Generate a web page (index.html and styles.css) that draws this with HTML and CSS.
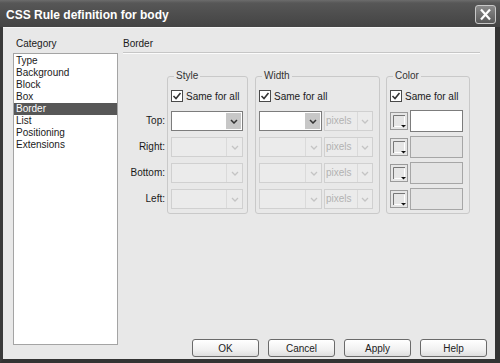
FILE: index.html
```html
<!DOCTYPE html>
<html lang="en">
<head>
<meta charset="UTF-8">
<title>CSS Rule definition for body</title>
<link rel="stylesheet" href="styles.css">
</head>
<body>

<div class="window">
  <div class="titlebar">
    <span class="title">CSS Rule definition for body</span>
    <div class="close">
      <svg width="19" height="17" viewBox="0 0 19 17"><path d="M5 3.5 L14 13.5 M14 3.5 L5 13.5" stroke="#fff" stroke-width="2.2" fill="none"/></svg>
    </div>
  </div>

  <div class="content">
    <div class="sidebar">
      <div class="caption">Category</div>
      <ul class="category-list">
        <li>Type</li>
        <li>Background</li>
        <li>Block</li>
        <li>Box</li>
        <li class="selected">Border</li>
        <li>List</li>
        <li>Positioning</li>
        <li>Extensions</li>
      </ul>
    </div>

    <div class="main">
      <div class="section-title">Border</div>

      <div class="panel">
        <div class="row-labels">
          <div>Top:</div>
          <div>Right:</div>
          <div>Bottom:</div>
          <div>Left:</div>
        </div>

        <!-- Style column -->
        <fieldset class="group group-style">
          <legend>Style</legend>
          <div class="check"><span class="box"><svg width="10" height="10" viewBox="0 0 10 10"><path d="M1.5 5 L4 7.5 L8.5 2" stroke="#333" stroke-width="1.6" fill="none"/></svg></span>Same for all</div>
          <div class="field-row"><div class="select style-select"><span class="arrow"><svg width="8" height="5" viewBox="0 0 8 5"><path d="M1 1 L4 4 L7 1" stroke="#333" stroke-width="1.5" fill="none"/></svg></span></div></div>
          <div class="field-row"><div class="select style-select disabled"><span class="arrow"><svg width="8" height="5" viewBox="0 0 8 5"><path d="M1 1 L4 4 L7 1" stroke="#c4c4c4" stroke-width="1.3" fill="none"/></svg></span></div></div>
          <div class="field-row"><div class="select style-select disabled"><span class="arrow"><svg width="8" height="5" viewBox="0 0 8 5"><path d="M1 1 L4 4 L7 1" stroke="#c4c4c4" stroke-width="1.3" fill="none"/></svg></span></div></div>
          <div class="field-row"><div class="select style-select disabled"><span class="arrow"><svg width="8" height="5" viewBox="0 0 8 5"><path d="M1 1 L4 4 L7 1" stroke="#c4c4c4" stroke-width="1.3" fill="none"/></svg></span></div></div>
        </fieldset>

        <!-- Width column -->
        <fieldset class="group group-width">
          <legend>Width</legend>
          <div class="check"><span class="box"><svg width="10" height="10" viewBox="0 0 10 10"><path d="M1.5 5 L4 7.5 L8.5 2" stroke="#333" stroke-width="1.6" fill="none"/></svg></span>Same for all</div>
          <div class="field-row">
            <div class="select width-select"><span class="arrow"><svg width="8" height="5" viewBox="0 0 8 5"><path d="M1 1 L4 4 L7 1" stroke="#333" stroke-width="1.5" fill="none"/></svg></span></div>
            <div class="select unit-select disabled"><span class="value">pixels</span><span class="arrow"><svg width="8" height="5" viewBox="0 0 8 5"><path d="M1 1 L4 4 L7 1" stroke="#c4c4c4" stroke-width="1.3" fill="none"/></svg></span></div>
          </div>
          <div class="field-row">
            <div class="select width-select disabled"><span class="arrow"><svg width="8" height="5" viewBox="0 0 8 5"><path d="M1 1 L4 4 L7 1" stroke="#c4c4c4" stroke-width="1.3" fill="none"/></svg></span></div>
            <div class="select unit-select disabled"><span class="value">pixels</span><span class="arrow"><svg width="8" height="5" viewBox="0 0 8 5"><path d="M1 1 L4 4 L7 1" stroke="#c4c4c4" stroke-width="1.3" fill="none"/></svg></span></div>
          </div>
          <div class="field-row">
            <div class="select width-select disabled"><span class="arrow"><svg width="8" height="5" viewBox="0 0 8 5"><path d="M1 1 L4 4 L7 1" stroke="#c4c4c4" stroke-width="1.3" fill="none"/></svg></span></div>
            <div class="select unit-select disabled"><span class="value">pixels</span><span class="arrow"><svg width="8" height="5" viewBox="0 0 8 5"><path d="M1 1 L4 4 L7 1" stroke="#c4c4c4" stroke-width="1.3" fill="none"/></svg></span></div>
          </div>
          <div class="field-row">
            <div class="select width-select disabled"><span class="arrow"><svg width="8" height="5" viewBox="0 0 8 5"><path d="M1 1 L4 4 L7 1" stroke="#c4c4c4" stroke-width="1.3" fill="none"/></svg></span></div>
            <div class="select unit-select disabled"><span class="value">pixels</span><span class="arrow"><svg width="8" height="5" viewBox="0 0 8 5"><path d="M1 1 L4 4 L7 1" stroke="#c4c4c4" stroke-width="1.3" fill="none"/></svg></span></div>
          </div>
        </fieldset>

        <!-- Color column -->
        <fieldset class="group group-color">
          <legend>Color</legend>
          <div class="check"><span class="box"><svg width="10" height="10" viewBox="0 0 10 10"><path d="M1.5 5 L4 7.5 L8.5 2" stroke="#333" stroke-width="1.6" fill="none"/></svg></span>Same for all</div>
          <div class="field-row">
            <span class="swatch"><svg width="18" height="18" viewBox="0 0 18 18"><rect x="0.5" y="0.5" width="17" height="17" fill="#e6e6e6" stroke="#9a9a9a"/><path d="M3.5 15 V3.5 H15" stroke="#777" fill="none"/><path d="M4.5 14.5 H14.5 V4.5" stroke="#fff" fill="none"/><path d="M11 13 H16 L13.5 15.5 Z" fill="#111"/></svg></span>
            <div class="color-input"></div>
          </div>
          <div class="field-row">
            <span class="swatch"><svg width="18" height="18" viewBox="0 0 18 18"><rect x="0.5" y="0.5" width="17" height="17" fill="#e6e6e6" stroke="#9a9a9a"/><path d="M3.5 15 V3.5 H15" stroke="#777" fill="none"/><path d="M4.5 14.5 H14.5 V4.5" stroke="#fff" fill="none"/><path d="M11 13 H16 L13.5 15.5 Z" fill="#111"/></svg></span>
            <div class="color-input disabled"></div>
          </div>
          <div class="field-row">
            <span class="swatch"><svg width="18" height="18" viewBox="0 0 18 18"><rect x="0.5" y="0.5" width="17" height="17" fill="#e6e6e6" stroke="#9a9a9a"/><path d="M3.5 15 V3.5 H15" stroke="#777" fill="none"/><path d="M4.5 14.5 H14.5 V4.5" stroke="#fff" fill="none"/><path d="M11 13 H16 L13.5 15.5 Z" fill="#111"/></svg></span>
            <div class="color-input disabled"></div>
          </div>
          <div class="field-row">
            <span class="swatch"><svg width="18" height="18" viewBox="0 0 18 18"><rect x="0.5" y="0.5" width="17" height="17" fill="#e6e6e6" stroke="#9a9a9a"/><path d="M3.5 15 V3.5 H15" stroke="#777" fill="none"/><path d="M4.5 14.5 H14.5 V4.5" stroke="#fff" fill="none"/><path d="M11 13 H16 L13.5 15.5 Z" fill="#111"/></svg></span>
            <div class="color-input disabled"></div>
          </div>
        </fieldset>
      </div>

      <div class="buttons">
        <button>OK</button>
        <button>Cancel</button>
        <button>Apply</button>
        <button>Help</button>
      </div>
    </div>
  </div>
</div>

</body>
</html>
```

FILE: styles.css
```css
body {
  margin: 0;
  font-family: "Liberation Sans", Arial, sans-serif;
  font-size: 10px;
  color: #1a1a1a;
  background-color: #e8e8e8;
}

.window {
  width: 500px;
  height: 363px;
  display: flex;
  flex-direction: column;
}

/* Title bar */
.titlebar {
  height: 27px;
  box-sizing: border-box;
  padding: 5px 4px 0 6px;
  display: flex;
  justify-content: space-between;
  align-items: flex-start;
  background: linear-gradient(#6c6c6c 0, #575757 3px, #4d4d4d 55%, #444 100%);
}
.title {
  color: #fff;
  font-size: 12px;
  font-weight: bold;
  line-height: 20px;
}
.close {
  width: 21px;
  height: 19px;
  box-sizing: border-box;
  border: 1px solid #c8c8c8;
  border-radius: 3px;
  background: linear-gradient(#8a8a8a, #5a5a5a);
  display: flex;
  align-items: center;
  justify-content: center;
}

/* Dialog body */
.content {
  flex: 1;
  display: flex;
  padding: 10px 8px 2px 10px;
  border-left: 3px solid #3a3a3a;
  border-right: 5px solid #333;
  border-bottom: 4px solid #333;
  box-shadow: inset 0 1px 0 #f4f4f4;
}

.sidebar {
  width: 105px;
  display: flex;
  flex-direction: column;
  padding-bottom: 12px;
}
.caption {
  height: 16px;
  line-height: 14px;
  padding-left: 3px;
}
.category-list {
  flex: 1;
  list-style: none;
  margin: 0;
  padding: 1px 0 0 0;
  background-color: #fff;
  border: 1px solid #a4a4a4;
}
.category-list li {
  height: 12px;
  line-height: 12px;
  padding-left: 2px;
}
.category-list li.selected {
  background-color: #575757;
  color: #fff;
}

.main {
  flex: 1;
  margin-left: 5px;
  display: flex;
  flex-direction: column;
}
.section-title {
  height: 15px;
  line-height: 14px;
  margin-right: 7px;
  border-bottom: 1px solid #c6c6c6;
  box-shadow: 0 1px 0 #fbfbfb;
}

.panel {
  display: flex;
  align-items: flex-start;
  margin-top: 16px;
}
.row-labels {
  width: 42px;
  margin-right: 2px;
  padding-top: 42px;
  text-align: right;
}
.row-labels div {
  height: 20px;
  line-height: 20px;
  margin-bottom: 6px;
}

/* Group boxes */
.group {
  margin: 0 7px 0 0;
  padding: 0 4px 4px 3px;
  border: 1px solid #c9c9c9;
  border-radius: 3px;
  min-width: 0;
  box-sizing: border-box;
}
.group legend {
  padding: 0 2px;
  margin-left: 3px;
  line-height: 14px;
  color: #333;
}
.group-style { width: 81px; }
.group-width { width: 125px; margin-right: 6px; }
.group-color { width: 84px; margin-right: 0; }

.check {
  display: flex;
  align-items: center;
  height: 14px;
  margin: 6px 0 8px 0;
  white-space: nowrap;
}
.check .box {
  width: 12px;
  height: 12px;
  box-sizing: border-box;
  border: 1px solid #4a4a4a;
  background-color: #fff;
  margin-right: 3px;
  display: flex;
  align-items: center;
  justify-content: center;
}

.field-row {
  display: flex;
  align-items: center;
  gap: 2px;
  height: 20px;
  margin-bottom: 6px;
}
.field-row:last-child {
  margin-bottom: 0;
}

/* Drop-down boxes */
.select {
  height: 20px;
  box-sizing: border-box;
  border: 1px solid #7c7c7c;
  background-color: #fff;
  display: flex;
  align-items: stretch;
  justify-content: space-between;
}
.select .arrow {
  width: 15px;
  margin-left: auto;
  background-color: #c7c7c7;
  border: 1px solid #fff;
  display: flex;
  align-items: center;
  justify-content: center;
}
.select.disabled {
  border-color: #d0d0d0;
  background-color: #ebebeb;
}
.select.disabled .arrow {
  background-color: transparent;
  border: none;
  border-left: 1px solid #dadada;
}
.style-select { width: 72px; }
.width-select { width: 63px; }
.unit-select { width: 49px; }
.unit-select .value {
  color: #b2b2b2;
  line-height: 18px;
  padding-left: 1px;
}
.unit-select .arrow { width: 14px; }

/* Color pickers */
.swatch {
  width: 18px;
  height: 18px;
  display: flex;
}
.color-input {
  width: 53px;
  height: 22px;
  box-sizing: border-box;
  border: 1px solid #7c7c7c;
  background-color: #fff;
}
.color-input.disabled {
  background-color: #e4e4e4;
  border-color: #a6a6a6;
}

/* Bottom buttons */
.buttons {
  margin-top: auto;
  display: flex;
  justify-content: flex-end;
  gap: 9px;
}
.buttons button {
  width: 67px;
  height: 18px;
  padding: 0;
  font-family: "Liberation Sans", Arial, sans-serif;
  font-size: 10px;
  color: #222;
  border: 1px solid #6a6a6a;
  border-radius: 3px;
  background: linear-gradient(#ffffff, #f1f1f1 60%, #dedede);
}
```
